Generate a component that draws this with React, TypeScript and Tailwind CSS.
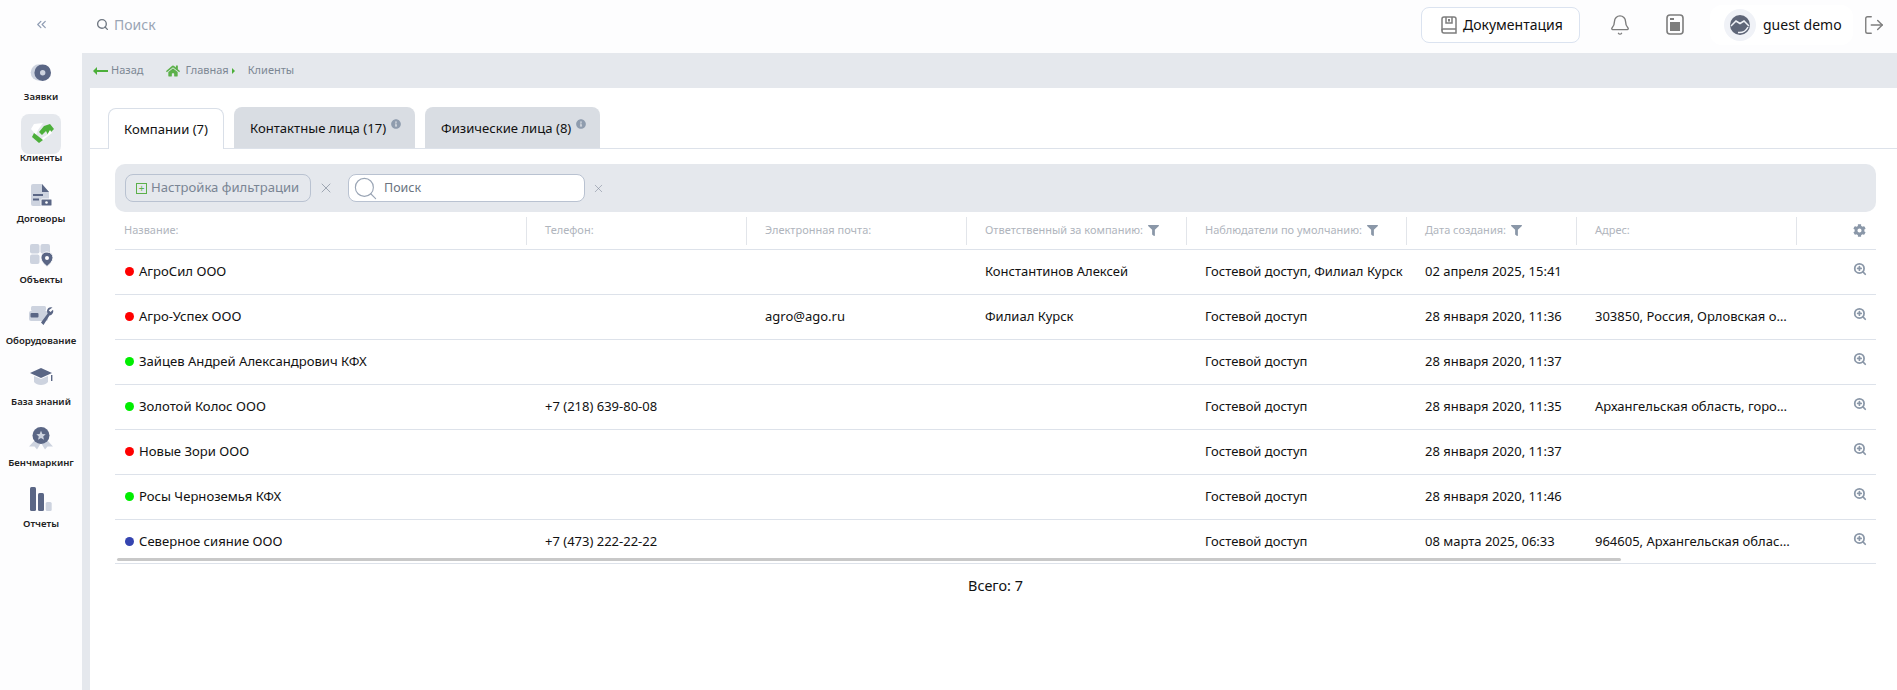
import React from "react";
import { Bell, ChevronsLeft, LogOut, Search, X, ZoomIn } from "lucide-react";
import { FaCog, FaFilter, FaHome, FaInfoCircle } from "react-icons/fa";

const D = "#5a6685";
const L = "#cdd3df";

const icons: Record<string, React.ReactNode> = {
  a: (
    <>
      <circle cx="18" cy="19.5" r="8.3" fill={L} />
      <circle cx="21.7" cy="19.7" r="5.5" fill="none" stroke={D} strokeWidth="5.6" />
    </>
  ),
  b: (
    <>
      <path d="M10 15 13 10 22 9 17 16 15 21Z" fill="#fff" />
      <path d="M18 18 23 12 29 10 33 15 27 21 25 17 21 21Z" fill="#4caf3a" />
      <path d="M11 23 13 19 22 26 18 29Z" fill="#4caf3a" />
      <path d="M22 26 31 19 29 16 26 21 21 24Z" fill="#fff" />
    </>
  ),
  c: (
    <>
      <path d="M12 9H21L28 17V31H12A2 2 0 0 1 10 29V11A2 2 0 0 1 12 9Z" fill={L} />
      <path d="M21 9 28 17H21Z" fill={D} />
      <rect x="12" y="19" width="10" height="2" fill={D} />
      <rect x="12" y="23.5" width="6" height="2" fill={D} />
      <rect x="20" y="24" width="11" height="7" rx="1" fill={D} stroke="#fdfdfe" strokeWidth="1" />
      <circle cx="25.5" cy="27.5" r="1.3" fill="#fff" />
    </>
  ),
  d: (
    <>
      <rect x="9" y="8" width="9.5" height="9.5" rx="2" fill={L} />
      <rect x="19.5" y="8" width="9.5" height="9.5" rx="2" fill={L} />
      <rect x="9" y="18.5" width="9.5" height="9.5" rx="2" fill={L} />
      <path d="M26 16C22.5 16 20 18.5 20 21.8 20 25 23 28 26 30.5 29 28 32 25 32 21.8 32 18.5 29.5 16 26 16Z" fill={D} stroke="#fdfdfe" />
      <circle cx="26" cy="22" r="2" fill="#fdfdfe" />
    </>
  ),
  e: (
    <>
      <rect x="10" y="9" width="15" height="5" rx="1.5" fill={L} />
      <rect x="8" y="14" width="19" height="10" rx="2" fill={L} />
      <rect x="9.5" y="16" width="8" height="4.5" rx="1" fill={D} />
      <path d="M31.5 10.5A4.5 4.5 0 0 0 26 13.5C26 15 26.3 15.7 26.7 16.5L20 25.5 22.5 28 28.5 18.5C31 18.5 33 15.5 32 12.8L29.5 15 27.7 13.2Z" fill={D} />
    </>
  ),
  f: (
    <>
      <path d="M13 18 20 21 27 18V24C24 28 16 28 13 24Z" fill={L} />
      <path d="M9 15 20 10 31 15 20 20Z" fill={D} />
      <rect x="30" y="17" width="1.4" height="6" fill={D} />
    </>
  ),
  g: (
    <>
      <path d="M14 21 8 27.5 13.5 27.5 16 30.5 20 24 24 30.5 26.5 27.5 32 27.5 26 21Z" fill={L} />
      <circle cx="20" cy="16.5" r="8.5" fill={D} />
      <path d="M20 11.8 21.4 15 24.7 15.2 22.2 17.4 23 20.7 20 19 17 20.7 17.8 17.4 15.3 15.2 18.6 15Z" fill={L} />
    </>
  ),
  h: (
    <>
      <rect x="9" y="7" width="6" height="24" rx="1.5" fill={D} />
      <rect x="17" y="13" width="6" height="18" rx="1.5" fill={D} />
      <rect x="24.7" y="22" width="6" height="9" rx="1.5" fill={L} />
    </>
  ),
};

const nav = [
  ["a", "Заявки"],
  ["b", "Клиенты"],
  ["c", "Договоры"],
  ["d", "Объекты"],
  ["e", "Оборудование"],
  ["f", "База знаний"],
  ["g", "Бенчмаркинг"],
  ["h", "Отчеты"],
];

const cols = "grid grid-cols-[412px_220px_220px_220px_220px_170px_220px_78px]";

const heads: [string, boolean][] = [
  ["Название:", false],
  ["Телефон:", false],
  ["Электронная почта:", false],
  ["Ответственный за компанию:", true],
  ["Наблюдатели по умолчанию:", true],
  ["Дата создания:", true],
  ["Адрес:", false],
];

const rows = [
  ["#ff0000", "АгроСил ООО", "", "", "Константинов Алексей", "Гостевой доступ, Филиал Курск", "02 апреля 2025, 15:41", ""],
  ["#ff0000", "Агро-Успех ООО", "", "agro@ago.ru", "Филиал Курск", "Гостевой доступ", "28 января 2020, 11:36", "303850, Россия, Орловская область, город Ливны"],
  ["#00ee00", "Зайцев Андрей Александрович КФХ", "", "", "", "Гостевой доступ", "28 января 2020, 11:37", ""],
  ["#00ee00", "Золотой Колос ООО", "+7 (218) 639-80-08", "", "", "Гостевой доступ", "28 января 2020, 11:35", "Архангельская область, город Архангельск"],
  ["#ff0000", "Новые Зори ООО", "", "", "", "Гостевой доступ", "28 января 2020, 11:37", ""],
  ["#00ee00", "Росы Черноземья КФХ", "", "", "", "Гостевой доступ", "28 января 2020, 11:46", ""],
  ["#3544b0", "Северное сияние ООО", "+7 (473) 222-22-22", "", "", "Гостевой доступ", "08 марта 2025, 06:33", "964605, Архангельская область, город Котлас"],
];

function Info() {
  return <FaInfoCircle className="ml-[5px] mb-[9px] text-[10px] text-[#8f9cae]" />;
}

export default function App() {
  return (
    <div className="flex h-screen flex-col overflow-hidden bg-[#e5e8ed] font-['Noto_Sans',sans-serif] text-[13.1px] text-[#111]">
      <header className="flex h-[53px] shrink-0 items-center bg-[#fdfdfe] pb-[4px]">
        <div className="flex w-[82px] justify-center">
          <ChevronsLeft size={15} className="text-[#8f9cb3]" />
        </div>
        <Search size={13} strokeWidth={2.5} className="ml-[14px] text-[#6f7782]" />
        <span className="ml-[5px] text-[14px] text-[#9aa5b5]">Поиск</span>
        <div className="ml-auto flex h-[36px] w-[159px] items-center rounded-lg border border-[#dbe3f0] bg-white pl-[19px] text-[14px]">
          <svg width="16" height="18" viewBox="0 0 16 18" fill="none" stroke="#7d7d7d" strokeWidth="1.5">
            <path d="M3 1H13A2 2 0 0 1 15 3V17H3A2 2 0 0 1 1 15V3A2 2 0 0 1 3 1Z" />
            <path d="M1 14.5A1.5 1.5 0 0 1 3 13H15" />
            <path d="M5 1V7H11V1" />
            <rect x="7" y="3" width="2" height="2.5" fill="#7d7d7d" stroke="none" />
          </svg>
          <span className="ml-[6px]">Документация</span>
        </div>
        <Bell size={22} strokeWidth={1.5} className="ml-[29px] text-[#7d7d7d]" />
        <svg className="ml-[35px]" width="18" height="21" viewBox="0 0 18 21">
          <rect x="1" y="1" width="16" height="19" rx="3" fill="none" stroke="#7d7d7d" strokeWidth="1.6" />
          <rect x="4" y="4" width="4" height="2" fill="#7d7d7d" />
          <rect x="4" y="8" width="10" height="9" fill="#7d7d7d" />
        </svg>
        <div className="ml-[26px] flex h-[40px] w-[143px] items-center rounded-xl bg-white pl-[14px] text-[14px]">
          <div className="flex size-[32px] items-center justify-center rounded-full bg-[#f0f2f7]">
            <svg width="22" height="22" viewBox="0 0 22 22">
              <circle cx="11" cy="11" r="10" fill="#5f6678" />
              <path d="M2 12 7 7 11 9.5 15 7 20 12" fill="none" stroke="#f0f2f7" strokeWidth="1.5" />
              <path d="M9 18.5C13 19 17 17 19 13" fill="none" stroke="#f0f2f7" strokeWidth="1.5" />
            </svg>
          </div>
          <span className="ml-[7px] whitespace-nowrap">guest demo</span>
        </div>
        <LogOut size={22} strokeWidth={1.5} className="ml-[10px] mr-[12px] text-[#7d7d7d]" />
      </header>

      <div className="flex min-h-0 flex-1">
        <aside className="flex w-[82px] shrink-0 flex-col items-center gap-[9px] bg-[#fdfdfe]">
          {nav.map(([k, label]) => (
            <div key={k} className="flex h-[52px] flex-col items-center">
              <div className={`size-[40px] rounded-lg ${k === "b" ? "bg-[#e5e8ed]" : ""}`}>
                <svg width="40" height="40" viewBox="0 0 40 40">
                  {icons[k]}
                </svg>
              </div>
              <span className="-mt-[3px] whitespace-nowrap text-[9.6px] font-semibold leading-[14px] text-[#222]">{label}</span>
            </div>
          ))}
        </aside>

        <main className="flex min-w-0 flex-1 flex-col pl-2">
          <nav className="flex h-[35px] shrink-0 items-center text-[11px] text-[#7c8794]">
            <svg className="ml-[3px]" width="15" height="8" viewBox="0 0 15 8">
              <path d="M0 4 4 0V3H15V5H4V8Z" fill="#4caf3a" />
            </svg>
            <span className="ml-[3px]">Назад</span>
            <FaHome className="ml-[23px] text-[14px] text-[#5cb04a]" />
            <span className="ml-[5px]">Главная</span>
            <span className="ml-[3px] size-0 border-y-[3px] border-l-[3px] border-y-transparent border-l-[#4caf3a]" />
            <span className="ml-[13px]">Клиенты</span>
          </nav>

          <section className="flex-1 bg-white">
            <div className="flex h-[61px] items-end gap-[10px] border-b border-[#dde2ea] pl-[18px]">
              <div className="-mb-px flex h-[41px] w-[116px] items-center justify-center rounded-t-lg border border-b-0 border-[#d9dfe8] bg-white pt-[2px]">
                Компании (7)
              </div>
              <div className="flex h-[41px] w-[181px] items-center rounded-t-lg bg-[#d9dde3] pl-[16px] pt-[2px]">
                Контактные лица (17)
                <Info />
              </div>
              <div className="flex h-[41px] w-[175px] items-center rounded-t-lg bg-[#d9dde3] pl-[16px] pt-[2px]">
                Физические лица (8)
                <Info />
              </div>
            </div>

            <div className="relative ml-[25px] mr-[21px]">
              <div className="mt-[15px] flex h-[48px] items-center rounded-[10px] bg-[#e5e8ed] pl-[10px]">
                <div className="flex h-[28px] w-[186px] items-center rounded-lg border border-[#b9c2d1] pl-[10px] text-[#7a8594]">
                  <span className="flex size-[11px] items-center justify-center border border-[#5cb04a] text-[10px] leading-none text-[#5cb04a]">+</span>
                  <span className="ml-[4px] whitespace-nowrap">Настройка фильтрации</span>
                </div>
                <X size={16} strokeWidth={1} className="ml-[7px] text-[#7a8594]" />
                <div className="ml-[14px] flex h-[28px] w-[237px] items-center rounded-lg border border-[#b9c2d1] bg-white pl-[3px] text-[12.5px] text-[#6b7480]">
                  <Search size={27} strokeWidth={1} className="text-[#9aa5b5]" />
                  <span className="ml-[5px]">Поиск</span>
                </div>
                <X size={13} strokeWidth={1} className="ml-[7px] text-[#7a8594]" />
              </div>

              <div className={`${cols} h-[38px] items-center border-b border-[#dde2ea] text-[11px] text-[#b0b5bd]`}>
                {heads.map(([h, filter], i) => (
                  <div key={h} className={`flex h-[28px] items-center border-r border-[#e2e5ea] ${i === 0 ? "pl-[9px]" : "pl-[18px]"}`}>
                    {h}
                    {filter && <FaFilter className="ml-[5px] text-[11px] text-[#8a97a8]" />}
                  </div>
                ))}
                <div className="flex justify-end pr-[9px]">
                  <FaCog className="text-[13px] text-[#8a97a8]" />
                </div>
              </div>

              {rows.map((r, idx) => (
                <div key={r[1]} className={`${cols} ${idx === 6 ? "h-[44px]" : "h-[45px]"} items-center border-b border-[#dde2ea]`}>
                  <div className="flex items-center pl-[10px]">
                    <span className="size-[9px] rounded-full" style={{ backgroundColor: r[0] }} />
                    <span className="ml-[5px]">{r[1]}</span>
                  </div>
                  {r.slice(2).map((c, i) => (
                    <div key={i} className="truncate pl-[18px] pr-[3px] text-[13px]">
                      {c}
                    </div>
                  ))}
                  <div className="flex justify-end pb-[6px] pr-[8px]">
                    <ZoomIn size={14} strokeWidth={3} className="text-[#8a97a8]" />
                  </div>
                </div>
              ))}
              <div className="absolute left-[2px] top-[394px] h-[3px] w-[1504px] rounded bg-[#c8c8c8]" />
              <div className="mt-[11px] text-center text-[14.4px]">Всего: 7</div>
            </div>
          </section>
        </main>
      </div>
    </div>
  );
}
